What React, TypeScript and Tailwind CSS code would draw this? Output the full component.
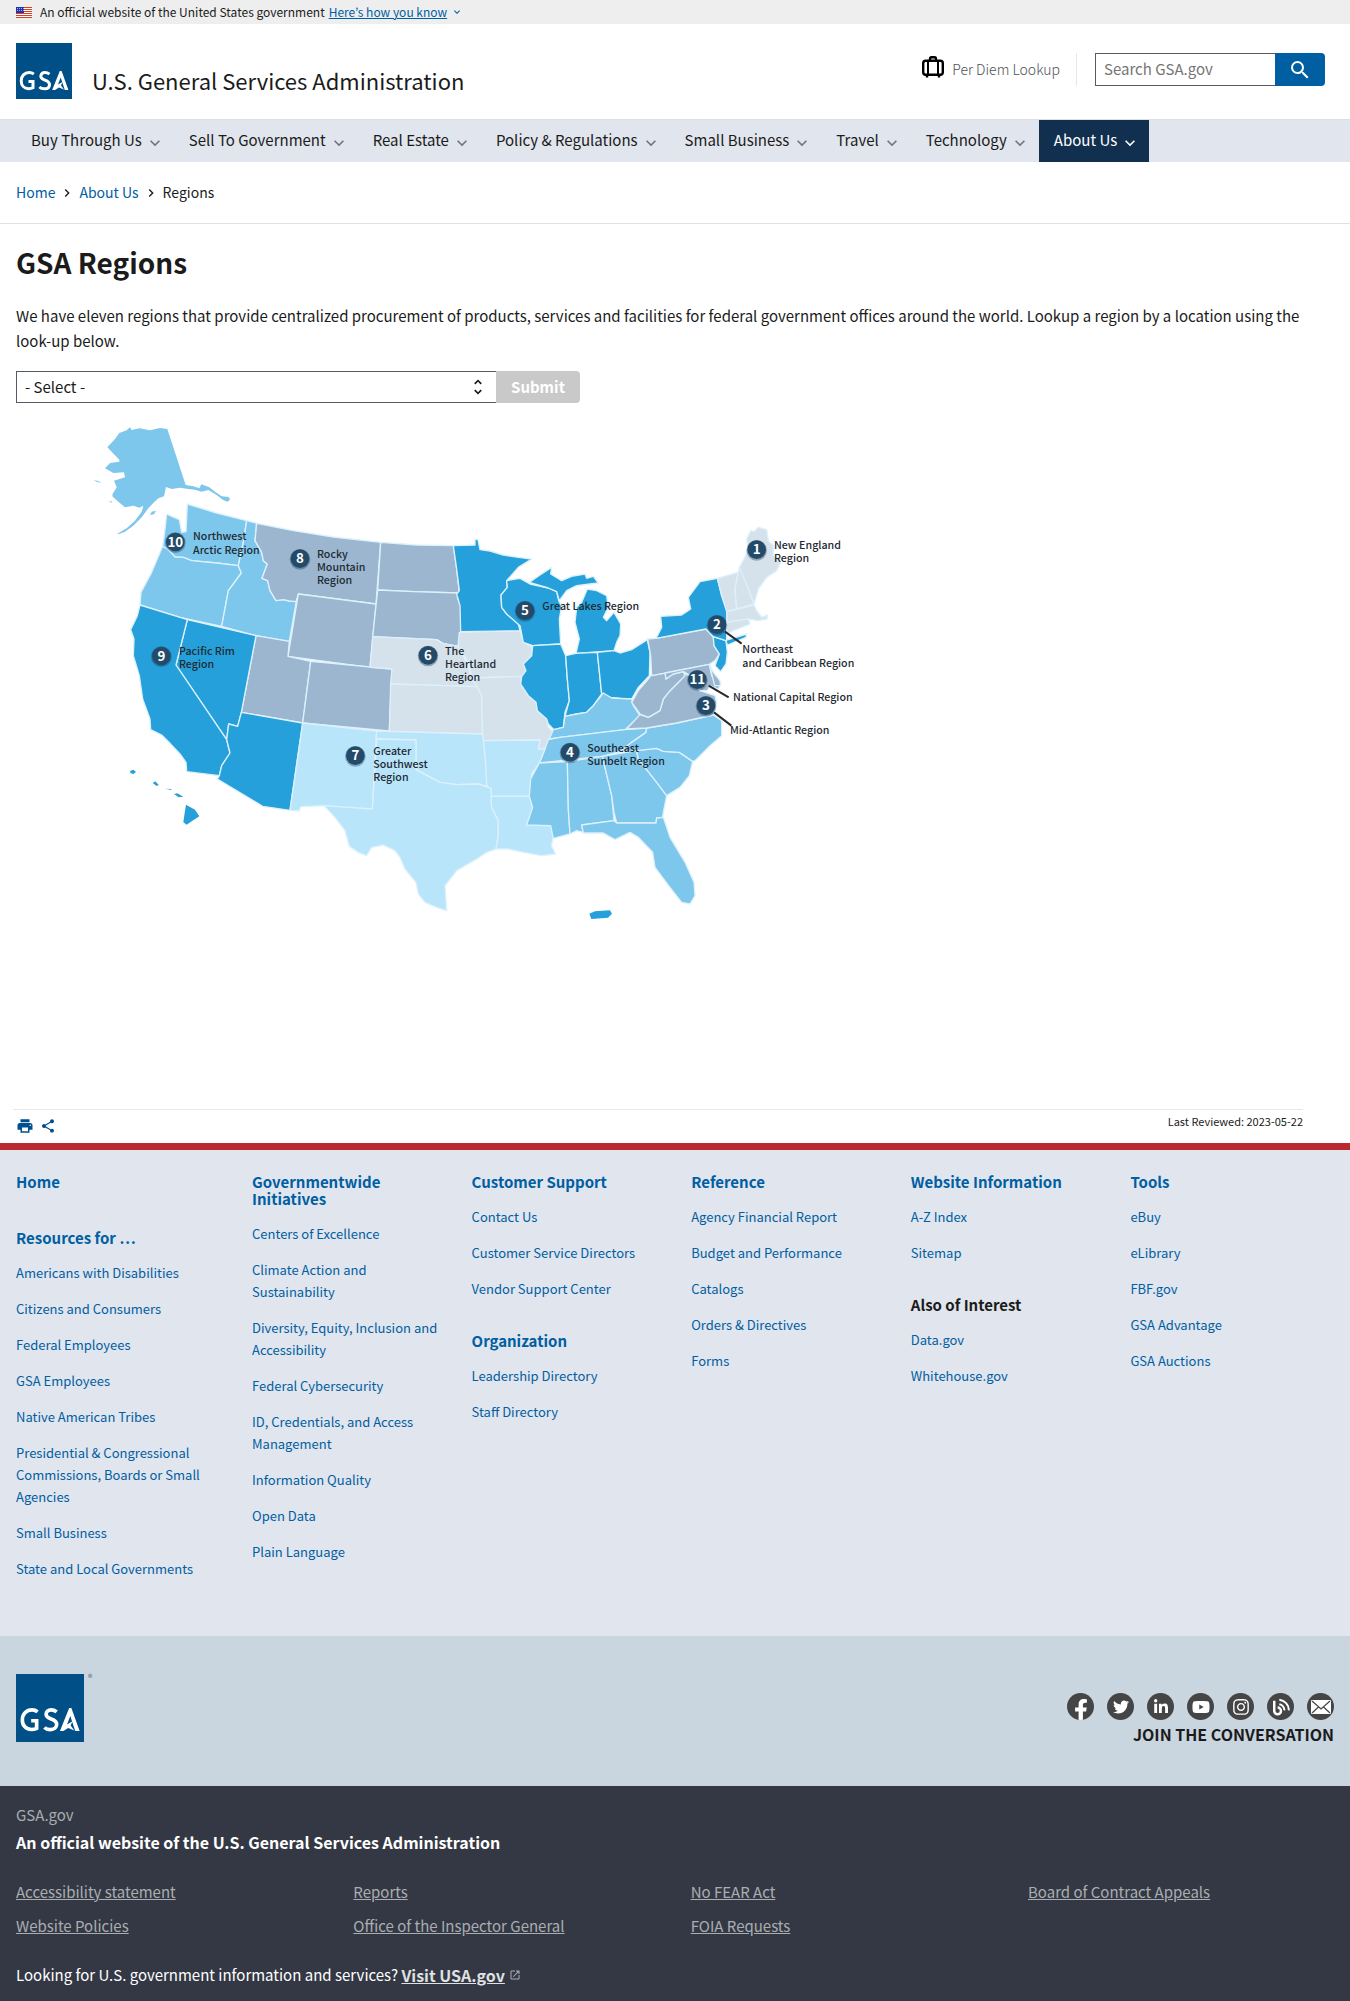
import { MdExpandMore, MdLaunch, MdNavigateNext, MdPrint, MdSearch, MdShare, MdUnfoldMore } from "react-icons/md";
import { FaFacebookF, FaTwitter, FaLinkedinIn, FaYoutube, FaInstagram } from "react-icons/fa";

const navItems = ["Buy Through Us", "Sell To Government", "Real Estate", "Policy & Regulations", "Small Business", "Travel", "Technology", "About Us"];

type Section = { title: string; plain?: boolean; links: string[] };

const footerColumns: Section[][] = [
  [
    { title: "Home", links: [] },
    {
      title: "Resources for …",
      links: ["Americans with Disabilities", "Citizens and Consumers", "Federal Employees", "GSA Employees", "Native American Tribes", "Presidential & Congressional Commissions, Boards or Small Agencies", "Small Business", "State and Local Governments"],
    },
  ],
  [
    {
      title: "Governmentwide Initiatives",
      links: ["Centers of Excellence", "Climate Action and Sustainability", "Diversity, Equity, Inclusion and Accessibility", "Federal Cybersecurity", "ID, Credentials, and Access Management", "Information Quality", "Open Data", "Plain Language"],
    },
  ],
  [
    { title: "Customer Support", links: ["Contact Us", "Customer Service Directors", "Vendor Support Center"] },
    { title: "Organization", links: ["Leadership Directory", "Staff Directory"] },
  ],
  [{ title: "Reference", links: ["Agency Financial Report", "Budget and Performance", "Catalogs", "Orders & Directives", "Forms"] }],
  [
    { title: "Website Information", links: ["A-Z Index", "Sitemap"] },
    { title: "Also of Interest", plain: true, links: ["Data.gov", "Whitehouse.gov"] },
  ],
  [{ title: "Tools", links: ["eBuy", "eLibrary", "FBF.gov", "GSA Advantage", "GSA Auctions"] }],
];

const legalLinks = ["Accessibility statement", "Reports", "No FEAR Act", "Board of Contract Appeals", "Website Policies", "Office of the Inspector General", "FOIA Requests"];

const SKY = "#7dc6ec";
const SLATE = "#9bb6ce";
const BLUE = "#25a0da";
const MIST = "#d5e1eb";
const ICE = "#b8e5fa";

type Shape = [string, string];

const westStates: Shape[] = [
  [SKY, "M260 315L275 322L298 332L305 370L318 368L322 285L410 312L500 335L490 400L475 470L410 462L335 455L310 445L285 444L272 430L262 420L248 412L255 360Z"],
  [SKY, "M248 412L262 420L272 430L285 444L310 445L335 455L410 462L475 470L484 492L460 525L445 545L425 652L300 625L180 588L183 550L215 490Z"],
  [SKY, "M500 335L530 343L525 395L545 430L550 455L562 465L546 508L563 515L570 545L588 575L610 572L628 576L650 570L628 697L528 680L425 652L445 545L460 525L484 492L475 470L490 400Z"],
  [SLATE, "M530 343L640 365L760 384L902 400L888 585L655 555L648 578L628 576L610 572L588 575L570 545L563 515L546 508L562 465L550 455L545 430L525 395Z"],
  [SLATE, "M655 555L888 585L870 775L624 742Z"],
  [SLATE, "M528 680L628 697L624 742L692 757L668 942L484 910Z"],
  [BLUE, "M322 632L425 656L528 680L484 910L473 952L446 945L440 992L288 768Z"],
  [BLUE, "M180 588L322 632L288 768L440 992L450 1032L425 1070L418 1100L320 1088L318 1060L300 1035L270 1003L245 978L212 962L210 930L188 870L178 800L160 740L162 690L152 662L172 620Z"],
  [BLUE, "M484 910L668 942L630 1204L548 1192L412 1110L418 1100L425 1070L450 1032L440 992L446 945L473 952Z"],
  [SLATE, "M692 757L936 780L928 966L668 942Z"],
  [ICE, "M668 942L890 966L877 1202L732 1190L662 1193L658 1206L630 1204Z"],
  [SLATE, "M902 400L1010 408L1120 410L1130 480L1138 552L1000 548L893 543Z"],
  [SLATE, "M893 543L1000 548L1138 552L1132 566L1142 590L1142 670L1136 712L1090 704L1070 692L878 683Z"],
];

const centralStates: Shape[] = [
  [MIST, "M-52 353L140 362L160 374L204 382L230 430L245 477L262 503L2 495L6 450L-60 445Z"],
  [MIST, "M2 495L262 503L275 530L278 645L-2 638Z"],
  [MIST, "M208 340L390 335L400 370L428 385L425 410L400 435L408 455L395 473L245 477L235 430L204 382Z"],
  [MIST, "M245 477L395 472L392 495L415 530L438 550L442 575L470 600L475 625L490 640L488 662L475 665L465 690L445 690L450 663L278 665L275 530L262 503Z"],
  [BLUE, "M190 80L255 78L255 60L264 62L270 92L300 96L340 108L385 115L425 120L385 145L350 185L352 205L333 228L335 265L350 285L385 315L390 335L212 338L210 260L200 225L208 215L200 150Z"],
  [BLUE, "M350 185L390 178L420 195L475 207L500 218L506 245L515 262L508 300L512 375L428 380L400 370L390 320L350 285L335 265L333 228L352 205Z"],
  [BLUE, "M418 190L450 168L485 145L482 165L515 185L545 172L585 165L590 178L610 172L625 192L600 195L560 200L530 215L508 245L500 218L475 207Z"],
  [BLUE, "M592 210L620 215L650 230L655 265L640 295L650 305L672 280L692 315L690 350L680 370L672 395L558 403L568 360L555 310L560 265L575 250Z"],
  [BLUE, "M428 380L512 375L527 410L532 480L538 545L525 580L520 625L492 632L475 615L470 600L442 575L438 550L415 530L392 495L395 473L408 455L400 435L425 410Z"],
  [BLUE, "M527 410L558 403L622 400L635 525L610 560L590 580L560 585L525 592L538 545L532 480Z"],
  [BLUE, "M622 400L672 395L690 402L725 392L772 362L780 400L778 470L745 505L725 540L690 538L660 535L635 525Z"],
  [SKY, "M640 522L665 537L725 540L730 560L750 590L705 632L510 655L478 660L490 632L520 625L525 592L560 585L590 580L610 560Z"],
  [SKY, "M475 662L510 655L705 632L770 627L768 640L725 670L690 698L635 712L448 732L465 690Z"],
  [ICE, "M278 665L450 663L445 690L465 690L448 732L425 765L422 800L418 832L303 832L303 808L290 802Z"],
  [ICE, "M-40 636L278 645L287 730L290 802L265 795L200 797L150 790L78 752L78 663L-42 660Z"],
  [ICE, "M-40 660L78 663L78 752L150 790L200 797L265 795L303 808L305 865L325 905L325 950L318 990L290 1000L260 1020L200 1055L165 1100L170 1175L140 1165L105 1150L85 1125L78 1090L45 1050L30 1015L15 995L-20 978L-55 985L-70 1010L-95 1000L-122 982L-135 935L-165 895L-198 860L-53 870Z"],
  [ICE, "M303 832L418 832L428 865L410 918L482 920L490 955L484 980L497 1005L455 1010L400 1000L355 990L318 990L325 950L325 905L305 865Z"],
  [SKY, "M448 732L532 728L535 870L540 945L490 958L482 920L410 918L428 865L418 832L422 780Z"],
  [SKY, "M532 728L637 712L665 830L672 905L575 918L580 940L560 935L540 945L535 870Z"],
  [SKY, "M637 712L740 695L745 720L800 790L830 830L820 880L818 895L800 897L798 912L680 912L672 880L665 830Z"],
  [SKY, "M575 918L672 905L680 912L798 912L800 897L820 895L840 955L885 1030L912 1090L915 1130L900 1155L875 1150L840 1105L795 1045L788 1000L745 955L720 940L675 962L640 942L580 942Z"],
  [SKY, "M740 695L800 688L820 697L868 700L908 727L898 770L870 805L830 830L800 790L745 720Z"],
  [SKY, "M770 627L860 612L970 588L995 605L995 650L960 680L915 725L908 727L868 700L820 697L800 688L740 695L690 698L725 670L768 640Z"],
];

const eastStates: Shape[] = [
  [SLATE, "M20 660L60 617L85 625L120 605L130 570L150 545L180 515L195 495L220 505L240 545L285 560L290 580L280 618L170 642L80 657Z"],
  [SLATE, "M92 500L135 492L138 510L160 495L190 488L195 500L180 515L150 545L130 570L120 605L85 625L60 615L35 580L55 545L85 510Z"],
  [SLATE, "M83 390L108 388L258 360L280 385L282 410L298 435L285 455L268 466L95 500L92 440Z"],
  [SLATE, "M135 492L268 466L275 500L302 525L295 540L270 530L262 545L240 545L220 505L190 488L160 495L138 510Z"],
  [SLATE, "M268 466L280 490L300 515L302 530L284 530Z"],
  [BLUE, "M280 383L318 395L322 430L318 465L302 488L285 470L298 435L282 410Z"],
  [BLUE, "M108 388L125 355L122 322L185 318L212 300L205 265L240 218L292 208L305 260L320 300L320 393L380 375L378 385L322 408L318 395L280 383L258 360Z"],
  [MIST, "M292 208L355 190L345 240L350 300L320 308L305 260Z"],
  [MIST, "M345 240L358 175L370 200L390 250L402 285L350 300Z"],
  [MIST, "M358 175L372 150L385 120L380 90L392 65L402 68L415 55L440 62L445 95L460 110L460 140L482 160L470 185L440 205L415 240L402 285L385 240Z"],
  [MIST, "M320 308L402 288L410 305L425 325L443 318L440 330L415 335L385 330L320 340Z"],
  [MIST, "M320 340L385 330L390 345L340 365L320 375Z"],
];

const alaska =
  "M150 55L155 63L178 58L210 64L240 57L262 60L275 100L317 228L340 232L358 238L364 226L388 235L405 248L425 262L446 264L450 272L442 278L428 272L410 258L385 243L365 248L345 242L325 240L300 236L275 240L258 234L252 262L235 268L222 280L205 298L185 325L160 350L135 368L115 376L112 374L140 358L165 335L185 308L190 290L178 296L160 290L135 295L115 278L97 262L98 254L110 235L102 215L135 205L132 190L100 192L75 178L90 162L118 158L118 152L82 115L105 90L118 72L140 64Z";

const islands: Shape[] = [
  [SKY, "M40 214L52 215L66 222L52 219Z"],
  [SKY, "M85 276L98 278L95 281Z"],
  [SKY, "M210 318L215 308L228 305L222 316Z"],
  [BLUE, "M150 1086L160 1082L168 1089L160 1095L152 1093Z"],
  [BLUE, "M218 1122L226 1117L236 1128L230 1131Z"],
  [BLUE, "M256 1139L274 1140L274 1143Z"],
  [BLUE, "M282 1155L292 1153L310 1163L296 1165Z"],
  [BLUE, "M318 1187L345 1202L358 1222L335 1237L320 1247L310 1240L314 1212Z"],
  [BLUE, "M1528 1514L1545 1507L1590 1504L1596 1514L1584 1526L1534 1530Z"],
];

const labels: { n: string; x: number; y: number; tx: number; ty: number; step: number; lines: string[] }[] = [
  { n: "1", x: 2030, y: 422, tx: 2082, ty: 419, step: 39, lines: ["New England", "Region"] },
  { n: "2", x: 1911, y: 647, tx: 1987, ty: 731, step: 42, lines: ["Northeast", "and Caribbean Region"] },
  { n: "11", x: 1852, y: 812, tx: 1959, ty: 875, step: 39, lines: ["National Capital Region"] },
  { n: "3", x: 1878, y: 890, tx: 1950, ty: 974, step: 39, lines: ["Mid-Atlantic Region"] },
  { n: "4", x: 1470, y: 1030, tx: 1522, ty: 1028, step: 39, lines: ["Southeast", "Sunbelt Region"] },
  { n: "5", x: 1335, y: 605, tx: 1387, ty: 602, step: 39, lines: ["Great Lakes Region"] },
  { n: "6", x: 1044, y: 739, tx: 1095, ty: 737, step: 39, lines: ["The", "Heartland", "Region"] },
  { n: "7", x: 826, y: 1040, tx: 880, ty: 1037, step: 40, lines: ["Greater", "Southwest", "Region"] },
  { n: "8", x: 660, y: 449, tx: 711, ty: 446, step: 39, lines: ["Rocky", "Mountain", "Region"] },
  { n: "9", x: 244, y: 741, tx: 297, ty: 737, step: 39, lines: ["Pacific Rim", "Region"] },
  { n: "10", x: 286, y: 399, tx: 339, ty: 392, step: 42, lines: ["Northwest", "Arctic Region"] },
];

function States({ shapes }: { shapes: Shape[] }) {
  return (
    <>
      {shapes.map(([fill, d]) => (
        <path key={d} d={d} fill={fill} />
      ))}
    </>
  );
}

function RegionMap() {
  return (
    <svg viewBox="0 0 2400 1560" className="block w-[800px] max-w-full" role="img" aria-label="Map of the GSA regions">
      <g stroke="#dcf1fc" strokeWidth="4" strokeLinejoin="round">
        <States shapes={westStates} />
        <g transform="translate(930 330)">
          <States shapes={centralStates} />
        </g>
        <g transform="translate(1620 300)">
          <States shapes={eastStates} />
        </g>
      </g>
      <path d={alaska} fill={SKY} />
      <States shapes={islands} />
      <path d="M1935 668L1985 704M1886 830L1946 865M1902 910L1954 950" stroke="#2b2b2b" strokeWidth="6" />
      {labels.map((l) => (
        <g key={l.n}>
          <circle cx={l.x} cy={l.y + 2} r="31" fill="#16324a" opacity="0.35" />
          <circle cx={l.x} cy={l.y} r="28" fill="#234a68" />
          <text x={l.x} y={l.y + 14} textAnchor="middle" fontSize="40" fontWeight="700" fill="#fff">
            {l.n}
          </text>
          <text fontSize="32" fontWeight="500" fill="#1f2a33">
            {l.lines.map((line, i) => (
              <tspan key={line} x={l.tx} y={l.ty + i * l.step}>
                {line}
              </tspan>
            ))}
          </text>
        </g>
      ))}
    </svg>
  );
}

function GsaLogo({ className }: { className: string }) {
  return (
    <svg viewBox="0 0 56 56" className={className} role="img" aria-label="GSA">
      <rect width="56" height="56" fill="#005087" />
      <g fill="none" stroke="#fff" strokeWidth="3">
        <path d="M17.800 31.200C16.400 30 15 29.600 13.200 29.600C8.500 29.600 5.200 33 5.200 37.800C5.200 42.500 8.300 45.700 12.800 45.700C14.600 45.700 15.800 45.300 17 44.700V38.500H12.500" />
        <path d="M33.500 31.200C32 30 30.400 29.600 28.900 29.600C26.400 29.600 24.800 31.200 24.800 33.200C24.800 38 33.500 36.200 33.500 41.400C33.500 44.200 31.400 45.800 28.400 45.800C26.400 45.800 24.600 45.200 23.400 44" />
      </g>
      <path fill="#fff" d="M36.200 47L43.800 28H45.600L52.400 47H48.800L44.700 34.500L42 41.500L46.500 39L45 42.500L48 46.500L43 44.500L39 47Z" />
    </svg>
  );
}

function Flag() {
  return (
    <svg viewBox="0 0 16 11" className="h-[11px] w-4" aria-hidden="true">
      <rect width="16" height="11" fill="#fff" />
      <path stroke="#db3e1f" d="M0 .5H16M0 2.500H16M0 4.500H16M0 6.500H16M0 8.500H16M0 10.500H16" />
      <rect width="8" height="6" fill="#1e33b1" />
      <path stroke="#fff" strokeDasharray="1 1" strokeWidth=".6" d="M1 1.500H8M1 3.500H8" />
    </svg>
  );
}

function Suitcase() {
  return (
    <svg viewBox="0 0 22 22" className="mt-[3px] h-[22px] w-[22px] self-start" fill="none" stroke="#000" strokeWidth="2.400" aria-hidden="true">
      <rect x="1.200" y="4.700" width="19.600" height="14" rx="2.500" />
      <path strokeWidth="2" d="M6 4.500V19M16 4.500V19" />
      <path d="M8 4.500V3Q8 1.200 9.500 1.200H12.500Q14 1.200 14 3V4.500M5 19V21.500M17 19V21.500" />
    </svg>
  );
}

function BlogMark() {
  return (
    <svg viewBox="0 0 16 16" className="h-[18px] w-[18px]" fill="none" stroke="#fff" strokeWidth="2.200" aria-hidden="true">
      <path d="M2 2.500V11.500A3 3 0 1 0 5 8.500" />
      <path strokeWidth="1.800" d="M6.500 5.500A5.500 5.500 0 0 1 11 11M6.500 1.500A9.500 9.500 0 0 1 15 11" />
    </svg>
  );
}

function Envelope() {
  return (
    <svg viewBox="0 0 20 14" className="h-[14px] w-5" aria-hidden="true">
      <rect width="20" height="14" rx="1" fill="#fff" />
      <path fill="none" stroke="#454545" strokeWidth="1.200" d="M1 1L10 9L19 1M1 13L7.500 7M19 13L12.500 7" />
    </svg>
  );
}

const social = [
  { name: "Facebook", icon: <FaFacebookF className="mt-1.5 h-[22px] w-[22px]" /> },
  { name: "Twitter", icon: <FaTwitter className="h-4 w-4" /> },
  { name: "LinkedIn", icon: <FaLinkedinIn className="h-4 w-4" /> },
  { name: "YouTube", icon: <FaYoutube className="h-[18px] w-[18px]" /> },
  { name: "Instagram", icon: <FaInstagram className="h-[18px] w-[18px]" /> },
  { name: "Blog", icon: <BlogMark /> },
  { name: "Email", icon: <Envelope /> },
];

export default function App() {
  return (
    <div className="bg-white font-['Noto_Sans_CJK_SC','Noto_Sans',sans-serif] text-[15px] text-[#1b1b1b]">
      <header>
        <div className="flex h-6 items-center bg-[#eeeeee] px-4 text-[12px] leading-6">
          <Flag />
          <span className="ml-2">An official website of the United States government</span>
          <button type="button" className="ml-1 flex items-center gap-1 text-[#005ea2]">
            <span className="font-['Noto_Sans_CJK_KR','Noto_Sans',sans-serif] underline">Here’s how you know</span>
            <MdExpandMore className="h-3 w-3" />
          </button>
        </div>

        <div className="flex h-[95px] justify-between pr-[25px] pl-4">
          <a href="#home" className="flex pt-[19px]">
            <GsaLogo className="h-14 w-14" />
            <span className="ml-5 pt-[21px] text-[22px] leading-8">U.S. General Services Administration</span>
          </a>
          <div className="mt-[29px] flex h-[33px] items-stretch">
            <a href="#per-diem" className="flex items-center border-r border-[#e6e6e6] pr-4 text-[14px] font-light text-[#4c5156]">
              <Suitcase />
              <span className="ml-2">Per Diem Lookup</span>
            </a>
            <form className="ml-[18px] flex" role="search">
              <input type="search" aria-label="Search GSA.gov" placeholder="Search GSA.gov" className="w-[180px] border border-r-0 border-[#565c65] px-2 text-[15px] placeholder:text-[#757575]" />
              <button type="submit" aria-label="Search" className="flex w-[50px] items-center justify-center rounded-r bg-[#005ea2] text-white">
                <MdSearch className="h-6 w-6" />
              </button>
            </form>
          </div>
        </div>

        <nav className="flex h-[43px] border-t border-[#dcdee0] bg-[#e1e5ed] pb-px pl-4">
          {navItems.map((item) => (
            <button key={item} type="button" className={item === "About Us" ? "-mb-px flex items-center gap-[3px] bg-[#112f4e] pr-[9px] pb-px pl-[15px] text-white" : "flex items-center gap-[3px] pr-[9px] pl-[15px]"}>
              {item}
              <MdExpandMore className={item === "About Us" ? "mt-1 h-5 w-5" : "mt-1 h-5 w-5 text-[#71767a]"} />
            </button>
          ))}
        </nav>

        <nav aria-label="Breadcrumb" className="flex h-[62px] items-center border-b border-[#dfe1e2] px-4 text-[14px]">
          <a href="#home" className="text-[#005ea2]">Home</a>
          <MdNavigateNext className="mx-1 h-4 w-4" />
          <a href="#about" className="text-[#005ea2]">About Us</a>
          <MdNavigateNext className="mx-1 h-4 w-4" />
          <span>Regions</span>
        </nav>
      </header>

      <main className="px-4">
        <h1 className="pt-[18px] text-[28px] leading-10 font-bold">GSA Regions</h1>
        <p className="mt-[21px] leading-[25px]">
          We have eleven regions that provide centralized procurement of products, services and facilities for federal government offices around the world. Lookup a region by a location using the look-up below.
        </p>
        <form className="mt-[18px] flex h-8">
          <div className="relative w-[480px]">
            <select aria-label="Location" className="h-full w-full appearance-none border border-r-0 border-[#565c65] bg-white px-2">
              <option>- Select -</option>
            </select>
            <MdUnfoldMore className="pointer-events-none absolute top-1.5 right-2 h-5 w-5" />
          </div>
          <button type="button" disabled className="w-[84px] rounded-r bg-[#c9c9c9] font-bold text-white">Submit</button>
        </form>
        <div className="mt-[6px] ml-16">
          <RegionMap />
        </div>
        <div className="mt-[180px] mr-[31px] -ml-[3px] flex h-[34px] justify-between border-t border-[#e8e8e8] pl-[3px]">
          <div className="flex items-center gap-1.5 pb-0.5 text-[#00508f]">
            <button type="button" aria-label="Print"><MdPrint className="h-[18px] w-[18px]" /></button>
            <button type="button" aria-label="Share"><MdShare className="h-4 w-4" /></button>
          </div>
          <p className="text-[11px] leading-[22px]">Last Reviewed: 2023-05-22</p>
        </div>
      </main>

      <footer>
        <div className="grid min-h-[493px] grid-cols-[236px_repeat(5,1fr)] border-t-[7px] border-[#b9292f] bg-[#e1e5ed] pt-[23px] pl-4">
          {footerColumns.map((sections) => (
            <div key={sections[0].title} className="flex flex-col gap-8 pr-8">
              {sections.map((s) => (
                <section key={s.title} className={s.title === "Home" ? "pb-[7px]" : ""}>
                  <h2 className={s.plain ? "leading-[17px] font-bold" : "leading-[17px] font-bold text-[#005ea2]"}>
                    {s.plain ? s.title : <a href="#section">{s.title}</a>}
                  </h2>
                  {s.links.length > 0 && (
                    <ul className="mt-4 flex flex-col gap-[14px] text-[13px] leading-[22px] text-[#005ea2]">
                      {s.links.map((link) => (
                        <li key={link}><a href="#link">{link}</a></li>
                      ))}
                    </ul>
                  )}
                </section>
              ))}
            </div>
          ))}
        </div>

        <div className="flex h-[150px] items-start justify-between bg-[#c9d5df] px-4">
          <div className="flex pt-[38px]">
            <GsaLogo className="h-[68px] w-[68px]" />
            <span className="ml-1 text-[9px] leading-[8px] text-[#5c5c6a]">®</span>
          </div>
          <div className="flex flex-col items-end pt-[57px]">
            <div className="flex gap-[13px]">
              {social.map((s) => (
                <a key={s.name} href="#social" aria-label={s.name} className="flex h-[27px] w-[27px] items-center justify-center overflow-hidden rounded-full bg-[#454545] text-white">
                  {s.icon}
                </a>
              ))}
            </div>
            <p className="text-[16px] leading-[28px] font-bold">JOIN THE CONVERSATION</p>
          </div>
        </div>

        <div className="bg-[#343844] px-4 pt-4 pb-[10px] text-[#a9aeb1]">
          <p className="leading-[26px]">GSA.gov</p>
          <p className="text-[16px] leading-[28px] font-bold text-white">An official website of the U.S. General Services Administration</p>
          <ul className="mt-[19px] grid grid-cols-[1fr_1fr_1fr_306px] leading-[34px]">
            {legalLinks.map((link) => (
              <li key={link}><a href="#legal" className="underline">{link}</a></li>
            ))}
          </ul>
          <p className="mt-4 flex items-center leading-8 text-white">
            Looking for U.S. government information and services?&nbsp;
            <a href="#usa" className="flex items-center text-[16px] font-bold text-[#dfe1e2]">
              <span className="underline">Visit USA.gov</span>
              <MdLaunch className="ml-1 h-3 w-3 text-[#a9aeb1]" />
            </a>
          </p>
        </div>
      </footer>
    </div>
  );
}
